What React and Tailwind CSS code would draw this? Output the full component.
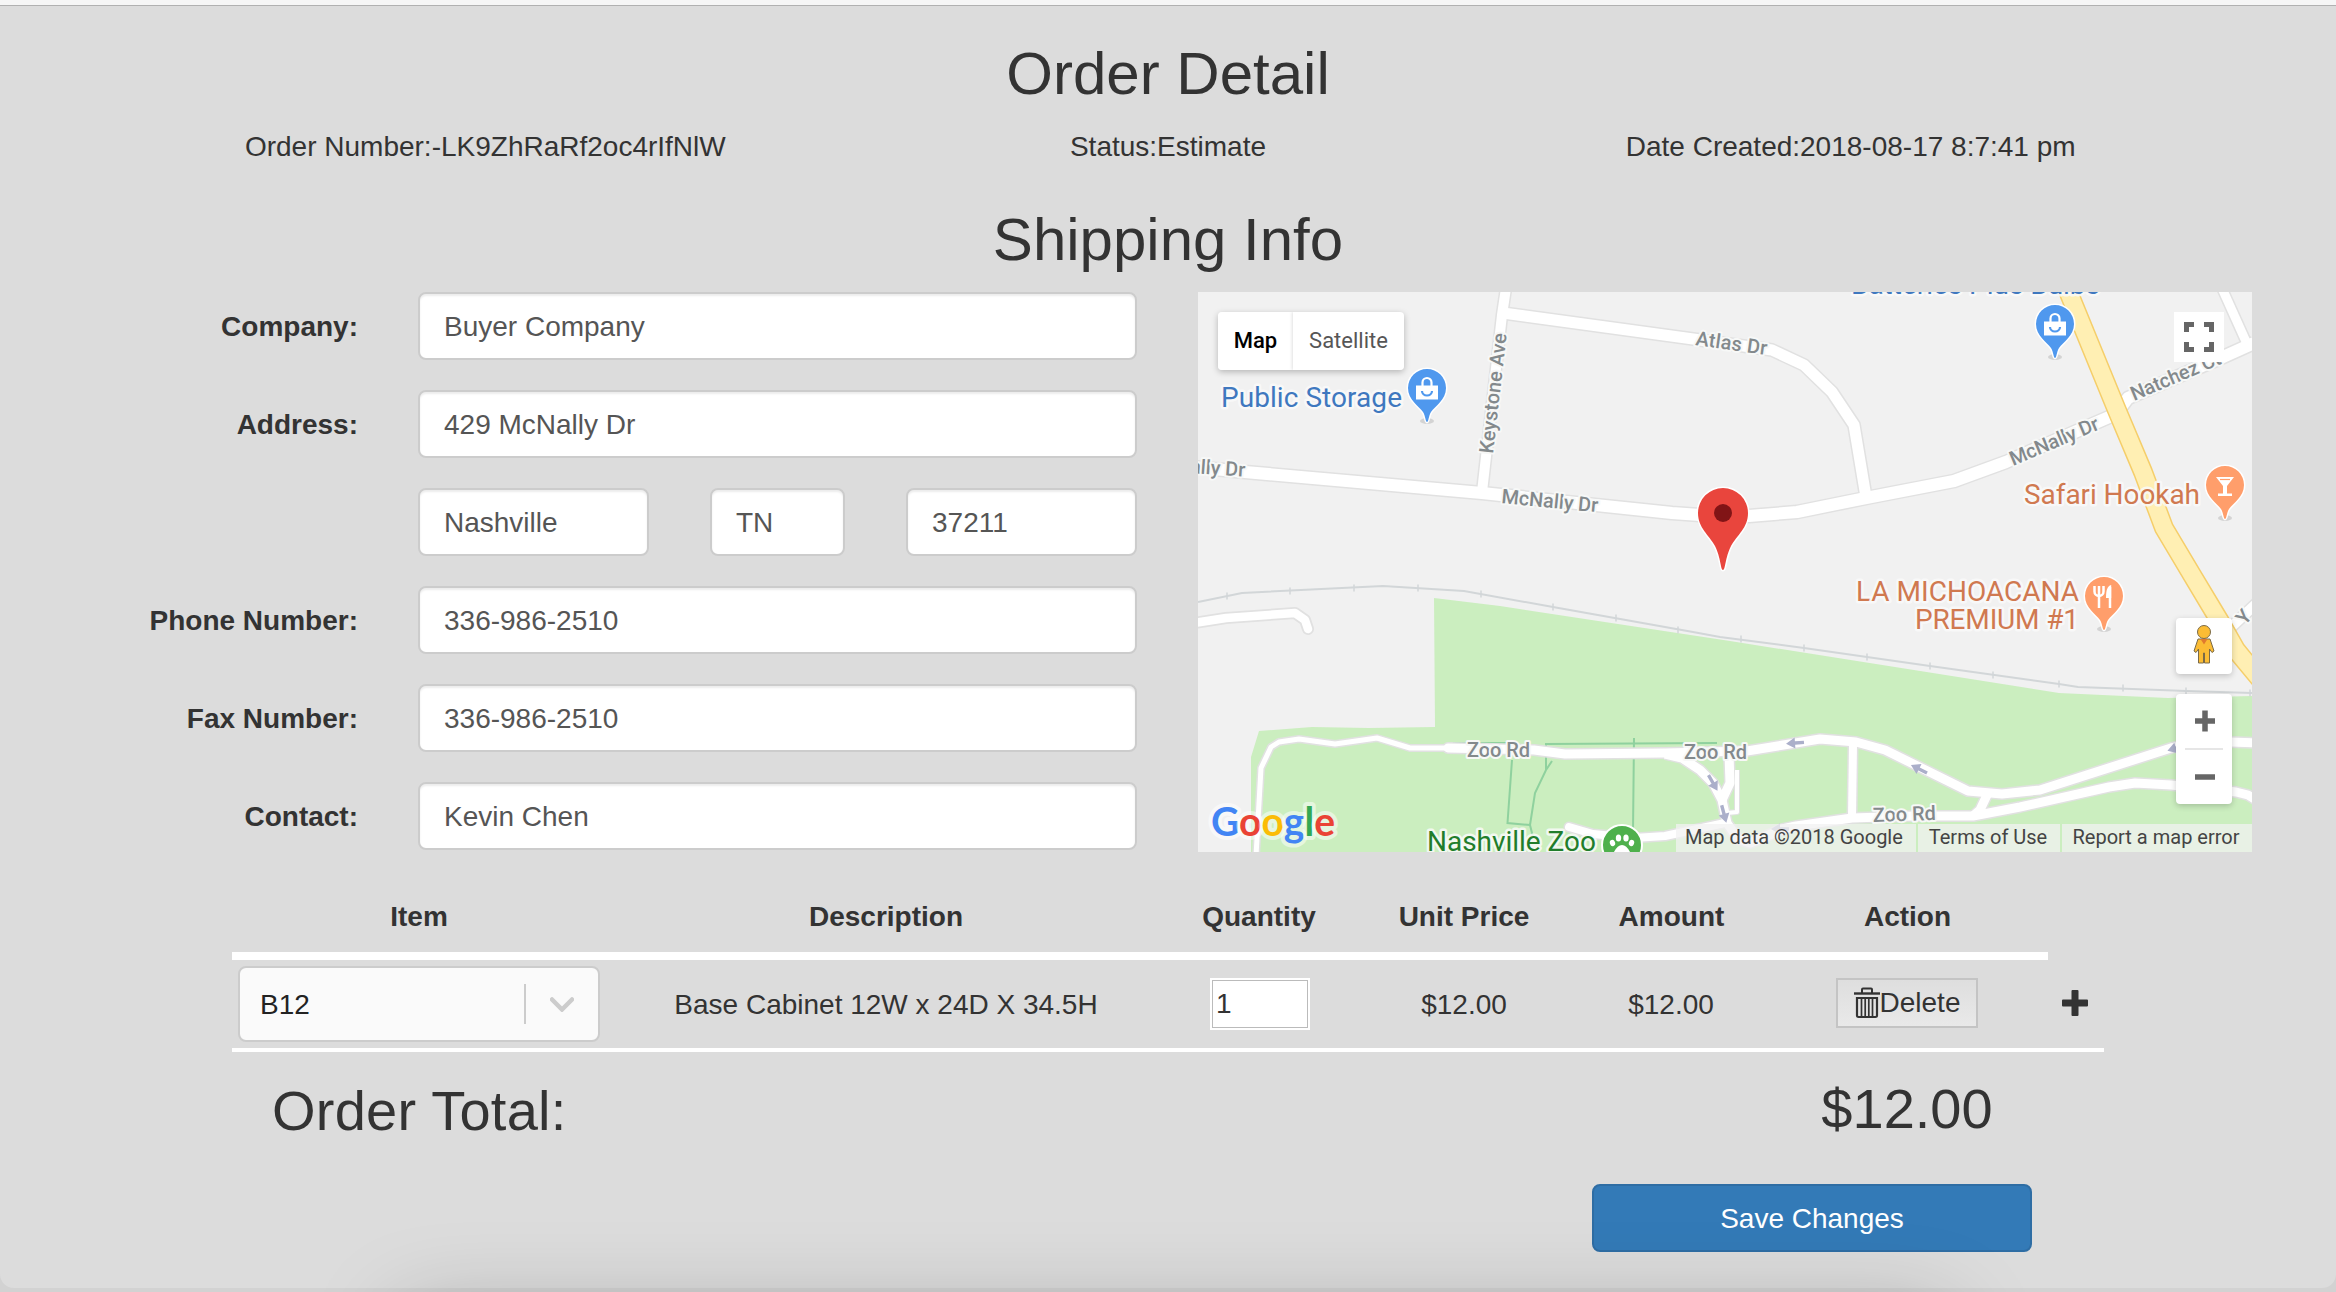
import React from "react";

const inputClass =
  "h-[68px] rounded-lg border-2 border-[#ccc] bg-white px-6 pt-0.5 text-[28px] text-[#555] outline-none shadow-[inset_0_2px_2px_rgba(0,0,0,0.075)]";

function Field({ label, value }) {
  return (
    <div className="flex h-[68px] items-center gap-[60px]">
      <label className="w-[358px] pt-px text-right font-bold">{label}</label>
      <input className={`${inputClass} w-[719px]`} defaultValue={value} />
    </div>
  );
}

function Road({ points, w = 12, c = 15, fill = "#fff", edge = "#e1e1e1", layer, cap = "butt" }) {
  return (
    <polyline
      points={points}
      fill="none"
      stroke={layer === "edge" ? edge : fill}
      strokeWidth={layer === "edge" ? c : w}
      strokeLinejoin="round"
      strokeLinecap={cap}
    />
  );
}

const roads = [
  { points: "-5,175 47,180 284,201 474,221 502,223 551,224 599,220 668,206 756,189 808,170 918,122 930,106 1025,65 1056,51" },
  { points: "308,-4 304,23 284,200", w: 10, c: 13 },
  { points: "305,21 488,46 560,56 574,58 606,73 634,100 656,133 668,205", w: 11, c: 14 },
  { points: "1023,-6 1050,54", w: 9, c: 12 },
  { points: "1030,338 1060,310", w: 10, c: 13 },
  { points: "-4,331 28,326 97,321 107,328 110,337", w: 8.5, c: 12, cap: "round" },
  { points: "58,564 63,476 73,455 81,450 101,447 137,452 179,446 212,456 249,456", w: 5, c: 8 },
  { points: "539,478 539,520 529,521", w: 4, c: 6 },
  { points: "655,451 654,526", w: 8, c: 11 },
  { points: "467,462 484,466 502,478 515,491 524,508 529,531 540,547 552,551 584,538", w: 9, c: 12 },
  { points: "531,462 532,491 524,508", w: 9, c: 12 },
  { points: "789,503 782,518 775,524", w: 9, c: 12 },
  { points: "371,535 395,542 436,546 467,544 527,531", w: 8, c: 11, cap: "round" },
  { points: "552,551 584,537 598,534 654,526 715,524 775,524 822,515 911,495 937,491 973,493 1038,500 1050,503 1058,508", w: 9, c: 12 },
  { points: "250,456 336,458 367,462 467,461 549,459 622,447 658,450 687,458 770,499 804,502 842,498 973,456 1004,449 1060,451", w: 9, c: 12, cap: "round" },
];

const ticks = [
  [29, 304], [92, 299], [156, 296], [220, 296], [283, 302], [355, 315], [418, 326], [480, 338], [543, 347],
  [606, 356], [669, 365], [732, 374], [795, 383], [861, 392], [925, 396], [988, 399], [1052, 401],
];

const arrows = [
  [597, 451, 176], [721, 477, 207], [515, 491, 60], [526, 522, 75], [978, 456, 162], [582, 537, 180],
];

const streetLabels = [
  ["Keystone Ave", 295, 162, -83.5, 121],
  ["McNally Dr", 303, 211, 5.5, 97],
  ["McNally Dr", -50, 178, 4, 97],
  ["McNally Dr", 815, 174, -23, 95],
  ["Natchez Ct", 936, 109, -23, 96],
  ["Atlas Dr", 497, 53, 8, 72],
  ["Zoo Rd", 269, 465, 0, 63],
  ["Zoo Rd", 486, 467, 0, 63],
  ["Zoo Rd", 675, 530, -2, 63],
  ["Y", 1047, 334, -50, 13],
];

const placeLabels = [
  ["Public Storage", 23, 115, 181, "#3f78bf"],
  ["Batteries Plus Bulbs", 653, 2, 249, "#3f78bf"],
  ["Safari Hookah", 826, 212, 176, "#d07950"],
  ["LA MICHOACANA", 658, 309, 223, "#d07950"],
  ["PREMIUM #1", 717, 337, 164, "#d07950"],
  ["Nashville Zoo", 229, 559, 169, "#217d2b"],
];

function Pin({ x, y, color, children }) {
  return (
    <g transform={`translate(${x} ${y})`}>
      <ellipse cx="0" cy="33" rx="7" ry="3" fill="#000" opacity="0.12" />
      <path
        d="M0 34 C-1.5 34 -1.5 28 -4 24 C-8 18 -19 12 -19 0 A19 19 0 0 1 19 0 C19 12 8 18 4 24 C1.5 28 1.5 34 0 34Z"
        fill={color}
        stroke="#fff"
        strokeWidth="3"
        paintOrder="stroke"
      />
      {children}
    </g>
  );
}

function Bag() {
  return (
    <g>
      <path d="M-11 -2.5 H11 V11.500 H-11Z" fill="#fff" />
      <path d="M-4.500 -2 V-5.500 a4.500 4.500 0 0 1 9 0 V-2" fill="none" stroke="#fff" strokeWidth="2.200" />
      <path d="M-5 3 a5 4.500 0 0 0 10 0" fill="none" stroke="#4f98ee" strokeWidth="2.200" />
    </g>
  );
}

function MapDrawing() {
  return (
    <svg className="block h-[560px] w-[1054px]" viewBox="0 0 1054 560">
      <rect width="1054" height="560" fill="#f1f1f1" />
      <polygon
        fill="#cbeebf"
        points="236,306 302,314 532,349 861,401 970,406 1054,404 1054,560 53,560 53,465 61,439 114,435 171,436 237,435"
      />
      <g fill="none" stroke="#8fd19e" strokeWidth="2">
        <path d="M255 451H309M348 478V452L519 451M314 468L309.500 531L332 533L335 545M354 469L348 478L337 501L332 533M436 446L435 540" />
      </g>
      <polyline
        points="0,310 44,301 185,294 266,299 355,315 495,340 522,345 606,356 732,374 861,392 880,395 989,399 1054,401"
        fill="none"
        stroke="#d2d6d8"
        strokeWidth="2"
      />
      {ticks.map(([x, y]) => (
        <path key={x} d={`M${x} ${y - 3.5}v7`} stroke="#d2d6d8" strokeWidth="1.500" />
      ))}
      {roads.map((r, i) => <Road key={i} {...r} layer="edge" />)}
      {roads.map((r, i) => <Road key={i} {...r} layer="fill" />)}
      <Road points="868,-6 918,116 945,180 966,236 994,283 1021,328 1038,358 1062,387" layer="edge" edge="#f5ce6a" c={20} />
      <Road points="868,-6 918,116 945,180 966,236 994,283 1021,328 1038,358 1062,387" layer="fill" fill="#ffefb3" w={17} />
      {arrows.map(([x, y, a]) => (
        <path key={x} transform={`translate(${x} ${y}) rotate(${a})`} d="M-9 -1.700H0V-5.500L9 0L0 5.500V1.700H-9Z" fill="#abafca" />
      ))}
      <g fontFamily="Roboto, sans-serif" fontSize="20" fontWeight="500" fill="#83898c" stroke="#f7f8f7" strokeWidth="4" strokeLinejoin="round" style={{ paintOrder: "stroke" }}>
        {streetLabels.map(([t, x, y, a, len]) => (
          <text key={t + x} transform={`translate(${x} ${y}) rotate(${a})`} textLength={len}>{t}</text>
        ))}
      </g>
      <g fontFamily="Roboto, sans-serif" fontSize="28" stroke="#fafafa" strokeWidth="5" strokeLinejoin="round" style={{ paintOrder: "stroke" }}>
        {placeLabels.map(([t, x, y, len, color]) => (
          <text key={t} x={x} y={y} textLength={len} fill={color} strokeOpacity="0.85">{t}</text>
        ))}
      </g>
      <Pin x={229} y={96} color="#4f98ee"><Bag /></Pin>
      <Pin x={857} y={32} color="#4f98ee"><Bag /></Pin>
      <Pin x={1027} y={193} color="#ff9e6b">
        <path d="M-9 -8H9L2 1V8.500H7V11H-7V8.500H-2V1Z" fill="#fff" />
        <path d="M-5 -5.500H5" stroke="#ff9e6b" strokeWidth="1.200" />
      </Pin>
      <Pin x={906} y={304} color="#ff9e6b">
        <path d="M-9.500 -10V-4.500a4.500 4.500 0 0 0 9 0V-10M-5 -10V12M6 12V-9" fill="none" stroke="#fff" strokeWidth="2.500" />
        <path d="M7.200 -11C3 -10 2 -5 2 2H7.200Z" fill="#fff" />
      </Pin>
      <circle cx="424" cy="553" r="20" fill="#4eb04c" stroke="#fff" strokeWidth="2" />
      <g fill="#fff">
        <ellipse cx="414.500" cy="551" rx="2.600" ry="3.200" transform="rotate(-20 414.500 551)" />
        <ellipse cx="420.500" cy="546" rx="2.700" ry="3.500" />
        <ellipse cx="428" cy="546" rx="2.700" ry="3.500" />
        <ellipse cx="433.500" cy="551" rx="2.600" ry="3.200" transform="rotate(20 433.500 551)" />
        <path d="M415 562 Q419 553 424 553 Q429 553 433 562Z" />
      </g>
      <path
        d="M525 278 C522.500 278 523 266 517 254 C511 243 500 236 500 221 A25 25 0 0 1 550 221 C550 236 539 243 533 254 C527 266 527.500 278 525 278Z"
        fill="#e9453d"
        stroke="#fff"
        strokeWidth="3"
        paintOrder="stroke"
      />
      <circle cx="525" cy="221" r="9" fill="#811416" />
      <text x="13" y="544" fontFamily="Lato, sans-serif" fontSize="40" fontWeight="700" textLength="124" lengthAdjust="spacingAndGlyphs" stroke="#fff" strokeOpacity="0.5" strokeWidth="8" strokeLinejoin="round" style={{ paintOrder: "stroke" }}>
        <tspan fill="#4285f4">G</tspan>
        <tspan fill="#ea4335">o</tspan>
        <tspan fill="#fbbc05">o</tspan>
        <tspan fill="#4285f4">g</tspan>
        <tspan fill="#34a853">l</tspan>
        <tspan fill="#ea4335">e</tspan>
      </text>
    </svg>
  );
}

function MapPanel() {
  return (
    <div className="relative h-[560px] w-[1054px] overflow-hidden font-['Roboto',sans-serif]">
      <MapDrawing />
      <div className="absolute left-5 top-5 flex h-[58px] overflow-hidden rounded shadow-[0_2px_6px_rgba(0,0,0,0.25)] text-[22px] leading-[58px]">
        <div className="w-[75px] bg-white text-center font-medium text-black">Map</div>
        <div className="w-[111px] bg-white text-center text-[#565656] shadow-[-1px_0_3px_rgba(0,0,0,0.12)]">Satellite</div>
      </div>
      <div className="absolute left-[976px] top-5 flex h-[50px] w-[50px] items-center justify-center bg-white">
        <svg className="h-[30px] w-[30px]" viewBox="0 0 30 30">
          <path d="M2.500 10V2.500H10M20 2.500H27.500V10M27.500 20V27.500H20M10 27.500H2.500V20" fill="none" stroke="#666" strokeWidth="5" />
        </svg>
      </div>
      <div className="absolute left-[978px] top-[326px] flex h-14 w-14 items-center justify-center rounded bg-white pb-1 shadow-[0_2px_6px_rgba(0,0,0,0.2)]">
        <svg className="h-[40px] w-[24px]" viewBox="0 0 24 40">
          <g fill="#fbbc34" stroke="#7a6a48" strokeWidth="1">
            <path d="M6 15 L2 27 L4 28.500 L6.500 25V39H11.500V29H12.500V39H17.500V25L20 28.500L22 27L18 15Z" />
            <circle cx="12" cy="8" r="6.500" />
          </g>
          <path d="M8.500 15H15.500L12 20.500Z" fill="#e07a2e" />
        </svg>
      </div>
      <div className="absolute left-[978px] top-[402px] flex h-[110px] w-14 flex-col items-center rounded bg-white shadow-[0_2px_6px_rgba(0,0,0,0.2)]">
        <svg className="ml-0.5 h-[54px] w-5" viewBox="0 0 20 54">
          <path d="M0 27H20M10 16.500V37.500" stroke="#666" strokeWidth="5.500" />
        </svg>
        <div className="h-0.5 w-[38px] bg-[#e6e6e6]" />
        <svg className="ml-0.5 h-[54px] w-5" viewBox="0 0 20 54">
          <path d="M0 27H20" stroke="#666" strokeWidth="5.500" />
        </svg>
      </div>
      <div className="absolute bottom-0 right-0 flex h-7 gap-0.5 text-[20px] leading-[26px] text-[#444]">
        <div className="w-[240px] bg-[#f1f1f1]/75 pl-[9px] whitespace-nowrap">Map data ©2018 Google</div>
        <div className="w-[142px] bg-[#f1f1f1]/75 pr-0.5 text-center whitespace-nowrap">Terms of Use</div>
        <div className="w-[190px] bg-[#f1f1f1]/75 pr-0.5 text-center whitespace-nowrap">Report a map error</div>
      </div>
    </div>
  );
}

function TrashIcon() {
  return (
    <svg className="h-8 w-[26px]" viewBox="0 0 26 32" fill="none" stroke="#333">
      <path d="M8 6V2.500Q8 1.500 9 1.500H17Q18 1.500 18 2.500V6" strokeWidth="2" />
      <path d="M0 6.500H26" strokeWidth="2.400" />
      <path d="M3 11H23V28.500Q23 30 21.500 30H4.500Q3 30 3 28.500Z" strokeWidth="2.200" />
      <path d="M7.500 11V30M11.200 11V30M14.800 11V30M18.500 11V30" strokeWidth="1.700" />
    </svg>
  );
}

const tableGrid = "grid grid-cols-[374px_560px_186px_224px_191px_281px_56px] items-center text-center";

export default function App() {
  return (
    <div className="relative h-[1292px] w-[2336px] overflow-hidden bg-[#d2d2d2] font-['Liberation_Sans',Arial,sans-serif] text-[28px] leading-10 text-[#333]">
      <div className="h-[1288px] rounded-b-[14px] bg-[#dcdcdc]">
        <div className="h-1.5 border-b border-[#b1b1b1] bg-[#f6f6f6]" />

        <h2 className="mt-[35px] text-center text-[60px] leading-[66px]">Order Detail</h2>
        <div className="mx-auto mt-5 grid w-[2048px] grid-cols-3 text-center">
          <div>Order Number:-LK9ZhRaRf2oc4rIfNlW</div>
          <div>Status:Estimate</div>
          <div>Date Created:2018-08-17 8:7:41 pm</div>
        </div>

        <h2 className="mt-10 text-center text-[60px] leading-[66px]">Shipping Info</h2>
        <div className="mt-[19px] flex gap-[61px]">
          <div className="flex flex-col gap-[30px]">
            <Field label="Company:" value="Buyer Company" />
            <Field label="Address:" value="429 McNally Dr" />
            <div className="flex gap-[61px] pl-[418px]">
              <input className={`${inputClass} w-[231px]`} defaultValue="Nashville" />
              <input className={`${inputClass} w-[135px]`} defaultValue="TN" />
              <input className={`${inputClass} w-[231px]`} defaultValue="37211" />
            </div>
            <Field label="Phone Number:" value="336-986-2510" />
            <Field label="Fax Number:" value="336-986-2510" />
            <Field label="Contact:" value="Kevin Chen" />
          </div>
          <MapPanel />
        </div>

        <div className="ml-[232px] w-[1872px]">
          <div className={`${tableGrid} h-[100px] pb-[15px] pt-[45px] font-bold`}>
            <div>Item</div>
            <div>Description</div>
            <div>Quantity</div>
            <div>Unit Price</div>
            <div>Amount</div>
            <div>Action</div>
          </div>
          <div className="h-2 w-[1816px] bg-white" />
          <div className={`${tableGrid} h-[92px] border-b-4 border-white`}>
            <div className="mx-auto flex h-[76px] w-[362px] items-center rounded-lg border-2 border-[#ccc] bg-[#fafafa] pl-5 text-[#222]">
              <span className="flex-1 pt-px text-left">B12</span>
              <span className="h-10 w-0.5 bg-[#ccc]" />
              <svg className="mx-6 h-4 w-6" viewBox="0 0 24 16">
                <path d="M2 3.500L12 13.500L22 3.500" fill="none" stroke="#ccc" strokeWidth="4.500" strokeLinecap="round" />
              </svg>
            </div>
            <div className="pt-px">Base Cabinet 12W x 24D X 34.5H</div>
            <div className="flex justify-center pl-0.5">
              <input className="h-[52px] w-[100px] border-2 border-[#fff] bg-white px-1 text-[28px] text-[#333] shadow-[inset_0_0_0_1px_#bbb] outline-none" defaultValue="1" />
            </div>
            <div className="pt-px">$12.00</div>
            <div className="pr-px pt-px">$12.00</div>
            <div className="flex justify-center pr-0.5">
              <button className="-mt-0.5 flex h-[50px] w-[142px] items-center justify-center border-2 border-[#c4c4c4] bg-linear-to-b from-[#dedede] to-[#e9e9e9] pl-px">
                <TrashIcon />
                <span className="-mt-px">Delete</span>
              </button>
            </div>
            <svg className="ml-[14px] -mt-0.5 h-[26px] w-[26px]" viewBox="0 0 26 26">
              <path d="M1 9.500H9.500V1Q9.500 0 10.500 0H15.500Q16.500 0 16.500 1V9.500H25Q26 9.500 26 10.500V15.500Q26 16.500 25 16.500H16.500V25Q16.500 26 15.500 26H10.500Q9.500 26 9.500 25V16.500H1Q0 16.500 0 15.500V10.500Q0 9.500 1 9.500Z" fill="#333" />
            </svg>
          </div>
          <div className="flex text-[56px] leading-[62px]">
            <div className="mt-7 w-[1535px] pl-10 tracking-[0.25px]">Order Total:</div>
            <div className="mt-[26px] w-[281px] pr-px text-center">$12.00</div>
          </div>
          <button className="ml-[1360px] mt-[42px] block h-[68px] w-[440px] rounded-lg border-2 border-[#2e6da4] bg-[#337ab7] pt-px text-center text-white">
            Save Changes
          </button>
        </div>
      </div>
      <div className="pointer-events-none absolute left-[402px] top-[1316px] h-40 w-[1545px] shadow-[0_0_90px_rgba(0,0,0,0.25)]" />
    </div>
  );
}
